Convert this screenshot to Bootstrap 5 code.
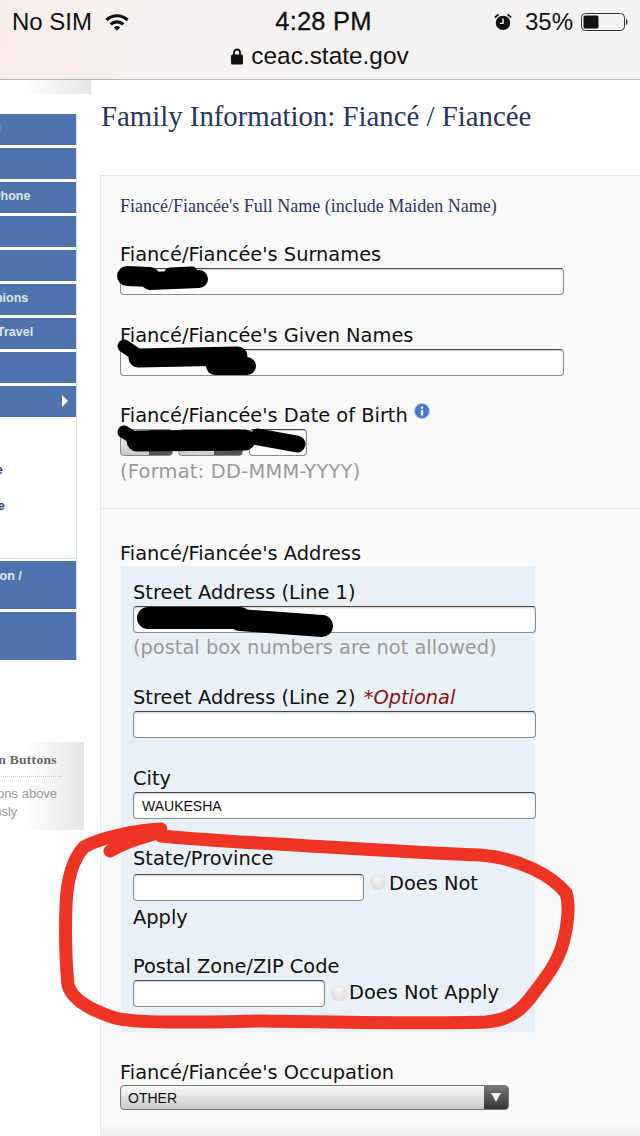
<!DOCTYPE html>
<html lang="en">
<head>
    <meta charset="UTF-8">
    <meta name="viewport" content="width=device-width, initial-scale=1.0">
    <title>Family Information: Fiancé / Fiancée</title>
    <link href="https://cdn.jsdelivr.net/npm/bootstrap@5.3.0/dist/css/bootstrap.min.css" rel="stylesheet">
    <style>
        html, body { width: 640px; height: 1136px; overflow: hidden; }
        body { background: #fff; color: #111; font-family: "DejaVu Sans", sans-serif; position: relative; }

        /* phone status bar */
        .phone-bar { height: 80px; border-bottom: 1px solid #b9b9b9; font-family: "Liberation Sans", sans-serif; color: #111;
            background: linear-gradient(100deg, #f8ece9 0%, #f5f2f1 22%, #f4f3f3 100%); }
        .phone-top { height: 43px; padding: 0 12px; font-size: 24px; }
        .phone-top > div { flex: 1 1 0; }
        .phone-sim { gap: 12px; }
        .phone-time { font-size: 25.5px; font-weight: 500; -webkit-text-stroke: .3px #111; letter-spacing: .2px; white-space: nowrap; padding-left: 7px; }
        .phone-url { font-size: 24.4px; height: 26px; line-height: 26px; margin-top: 0; }
        .alarm-ico { margin-right: 13px; }

        .top-strip { height: 14px; width: 91px; background: linear-gradient(90deg, #fff 25%, #e6e6e6 100%); }

        /* left nav, scrolled off the left edge */
        .side-col { width: 100px; flex: none; overflow: hidden; }
        .side-nav { width: 237px; margin-left: -160px; margin-top: 20px; border-right: 1px solid #d3dfe9; }
        .side-item { background: #4f73ad; color: #dfe6f0; font: bold 12.5px "Liberation Sans", sans-serif; height: 31px; margin-bottom: 3px; padding: 7px 0 0 73px; white-space: nowrap; position: relative; }
        .side-item.is-first { padding-left: 77px; }
        .side-item.is-tall { height: 48px; padding-top: 8px; }
        .side-arrow { position: absolute; right: 8px; top: 9px; border-left: 6px solid #fff; border-top: 6px solid transparent; border-bottom: 6px solid transparent; }
        .side-sub { height: 142px; margin-top: -3px; margin-bottom: 2px; border-bottom: 1px solid #d3dfe9; padding-top: 46px; font: bold 12.5px "Liberation Sans", sans-serif; color: #263a72; }
        .side-sub div { height: 36px; padding-left: 73px; white-space: nowrap; }
        .side-wrap { width: 84px; overflow: hidden; }
        .help-box { margin-top: 82px; height: 88px; width: 244px; margin-left: -160px; padding: 10px 22px 0 87px; background: linear-gradient(90deg, #fff 75%, #e6e6e6 100%); white-space: nowrap; }
        .help-title { font: bold 13.5px "Liberation Serif", serif; letter-spacing: .3px; color: #666; padding: 0 0 8px 13px; border-bottom: 1px dotted #c4c4c4; }
        .help-text { font: 13px/18px "Liberation Sans", sans-serif; color: #999; margin-top: 8px; }

        /* main column */
        .page-title { font: 28.8px/36px "Liberation Serif", serif; color: #29345f; margin: 4px 0 0 1px; }
        .form-panel { margin-top: 41px; padding: 20px 0 0 19px; border: 0 dotted #ddd; border-width: 1px 0 0 1px; height: 1000px; background: linear-gradient(#f9f9f9 941px, #f2f2f2 961px); }
        .panel-sub { font: 18px/20px "Liberation Serif", serif; color: #2c3768; margin: 0 0 27px; }
        .fld-label { font-size: 19.4px; line-height: 24px; height: 22px; white-space: nowrap; display: block; margin: 0 0 3px; }
        .fld-gap { margin-top: 28px; }
        .fld-gap-s { margin-top: 27px; }
        .fld-gap-l { margin-top: 29px; }
        .fld-gap-zip { margin-top: 21px; }
        .fld-dob { margin-top: 27px; margin-bottom: 4px; }
        .fld-input.form-control { height: 27px; min-height: 0; padding: 0 8px; font: 14px "Liberation Sans", sans-serif; color: #111; border: 1px solid #8d8d8d; border-top-color: #444; border-radius: 4px; box-shadow: inset 0 1px 2px rgba(0,0,0,.2); background: #fff; }
        .w-name { width: 444px; }
        .w-addr { width: 403px; }
        .fld-hint { font-size: 19.4px; line-height: 22px; color: #999; margin-top: 4px; }
        .fld-hint.is-date { margin-top: 5px; letter-spacing: .25px; }
        .fld-opt { color: #8a1410; font-style: italic; margin-left: 2px; }
        .info-dot { width: 16px; height: 16px; margin-left: 6px; vertical-align: 3px; }
        .date-sel { height: 27px; width: 53px; border: 1px solid #888; border-radius: 4px; background: linear-gradient(90deg, transparent 55%, #555 0), linear-gradient(#eee, #ccc); }
        .date-sel.is-mid { width: 65px; margin: 0 6px 0 5px; }
        .date-year.form-control { width: 58px; }
        .dotted-line { border-top: 1px dotted #d6d6d6; margin: 25px 0 33px -19px; }
        .addr-panel { width: 414px; height: 466px; margin: -1px 0 0 1px; padding: 15px 0 0 12px; background: #e9f0f6; }
        .state-row { font-size: 19.4px; line-height: 33px; margin-top: -5px; }
        .state-row .form-control { width: 231px; vertical-align: -2px; }
        .state-row .check-dot { margin-right: 3px; vertical-align: 0; }
        .zip-row .form-control { width: 192px; }
        .zip-row .fld-label { margin: 0 0 0 2px; line-height: 22px; }
        .check-dot { width: 16px; height: 16px; border-radius: 50%; flex: none; margin-left: 6px; background: radial-gradient(circle at 50% 35%, #f6f6f6, #d4d4d4); }
        .sel-box { width: 389px; height: 25px; margin-top: -1px; border: 1px solid #777; border-radius: 4px; background: linear-gradient(#fafafa, #c9c9c9); font: 14px "Liberation Sans", sans-serif; padding-left: 7px; overflow: hidden; }
        .sel-arrow { width: 24px; height: 100%; margin-left: auto; background: linear-gradient(#777, #333); }
        .sel-arrow span { border-top: 9px solid #eee; border-left: 5px solid transparent; border-right: 5px solid transparent; }

        /* pen marks on the screenshot */
        .ink-layer { position: absolute; left: 0; top: 0; pointer-events: none; }
    </style>
</head>
<body>
    <div class="phone-bar">
        <div class="phone-top d-flex align-items-center">
            <div class="d-flex align-items-center phone-sim">No SIM
                <svg width="26" height="19" viewBox="0 0 24 18"><path d="M1 6.5a16 16 0 0 1 22 0l-2 2.2a13 13 0 0 0-18 0z M5 10.6a10.4 10.4 0 0 1 14 0l-2.1 2.2a7.4 7.4 0 0 0-9.8 0z M9 14.6a4.6 4.6 0 0 1 6 0l-3 3.2z" fill="#111"/></svg>
            </div>
            <div class="text-center phone-time">4:28 PM</div>
            <div class="d-flex align-items-center justify-content-end">
                <svg width="18" height="20" viewBox="0 0 20 20" class="alarm-ico"><circle cx="10" cy="11" r="8" fill="#111"/><path d="M10 6v5.5h-3.5" stroke="#fff" stroke-width="1.6" fill="none"/><path d="M1 5l4-3.5M19 5l-4-3.5" stroke="#111" stroke-width="2"/></svg>
                <span>35%</span>
                <svg width="47" height="18" viewBox="0 0 47 18" class="ms-2"><rect x=".5" y=".5" width="43" height="17" rx="4" fill="none" stroke="#333"/><rect x="2.5" y="2.5" width="15" height="13" rx="1.5" fill="#111"/><path d="M45 6c2 0 2 6 0 6z" fill="#333"/></svg>
            </div>
        </div>
        <div class="phone-url d-flex justify-content-center align-items-center gap-2">
            <svg width="12" height="17" viewBox="0 0 12 17"><path d="M3 7V4.5a3 3 0 0 1 6 0V7" fill="none" stroke="#111" stroke-width="1.8"/><rect y="6.5" width="12" height="10" rx="1.5" fill="#111"/></svg>
            ceac.state.gov
        </div>
    </div>
    <div class="top-strip"></div>

    <div class="d-flex">
        <div class="side-col">
            <div class="side-nav">
                <div class="side-item is-first">Your Personal</div>
                <div class="side-item">Start</div>
                <div class="side-item">Address and Phone</div>
                <div class="side-item">Passport</div>
                <div class="side-item">Travel</div>
                <div class="side-item">Travel Companions</div>
                <div class="side-item">Previous U.S. Travel</div>
                <div class="side-item">U.S. Contact</div>
                <div class="side-item">Family<span class="side-arrow"></span></div>
                <div class="side-sub">
                    <div>Fiancé/Fiancée</div>
                    <div>Former Spouse</div>
                </div>
                <div class="side-item is-tall">Work / Education /</div>
                <div class="side-item is-tall mb-0">Security</div>
            </div>
            <div class="side-wrap">
                <div class="help-box">
                    <div class="help-title">Navigation Buttons</div>
                    <div class="help-text">Use the buttons above<br>used previously</div>
                </div>
            </div>
        </div>

        <div class="flex-grow-1">
            <h1 class="page-title">Family Information: Fiancé / Fiancée</h1>
            <div class="form-panel">
                <p class="panel-sub">Fiancé/Fiancée's Full Name (include Maiden Name)</p>

                <label class="fld-label">Fiancé/Fiancée's Surnames</label>
                <input class="form-control fld-input w-name" type="text">

                <label class="fld-label fld-gap-l">Fiancé/Fiancée's Given Names</label>
                <input class="form-control fld-input w-name" type="text">

                <label class="fld-label fld-dob">Fiancé/Fiancée's Date of Birth<svg class="info-dot" viewBox="0 0 16 16"><circle cx="8" cy="8" r="7.5" fill="#3f78d0" stroke="#a9c4ea"/><circle cx="8" cy="4.6" r="1.3" fill="#fff"/><rect x="6.8" y="7" width="2.4" height="5.5" fill="#fff"/></svg></label>
                <div class="d-flex">
                    <div class="date-sel"></div>
                    <div class="date-sel is-mid"></div>
                    <input class="form-control fld-input date-year" type="text">
                </div>
                <div class="fld-hint is-date">(Format: DD-MMM-YYYY)</div>

                <div class="dotted-line"></div>

                <label class="fld-label">Fiancé/Fiancée's Address</label>
                <div class="addr-panel">
                    <label class="fld-label">Street Address (Line 1)</label>
                    <input class="form-control fld-input w-addr" type="text">
                    <div class="fld-hint">(postal box numbers are not allowed)</div>

                    <label class="fld-label fld-gap-s">Street Address (Line 2) <span class="fld-opt">*Optional</span></label>
                    <input class="form-control fld-input w-addr" type="text">

                    <label class="fld-label fld-gap-l">City</label>
                    <input class="form-control fld-input w-addr" type="text" value="WAUKESHA">

                    <label class="fld-label fld-gap">State/Province</label>
                    <div class="state-row">
                        <input class="form-control fld-input d-inline-block" type="text"><span class="check-dot d-inline-block"></span>Does Not Apply
                    </div>

                    <label class="fld-label fld-gap-zip">Postal Zone/ZIP Code</label>
                    <div class="zip-row d-flex align-items-center">
                        <input class="form-control fld-input" type="text">
                        <span class="check-dot"></span><span class="fld-label">Does Not Apply</span>
                    </div>
                </div>

                <label class="fld-label fld-gap-l">Fiancé/Fiancée's Occupation</label>
                <div class="sel-box d-flex align-items-center">OTHER
                    <div class="sel-arrow d-flex align-items-center justify-content-center"><span></span></div>
                </div>
            </div>
        </div>
    </div>

    <svg class="ink-layer" width="640" height="1136" viewBox="0 0 640 1136">
        <g fill="none" stroke="#000" stroke-linecap="round" stroke-linejoin="round">
            <path d="M127 276L150 277" stroke-width="20"/>
            <path d="M150 281L199 279" stroke-width="18"/>
            <path d="M170 273L192 272" stroke-width="11"/>
            <path d="M124 346L136 354" stroke-width="13"/>
            <path d="M138 358L238 356" stroke-width="19"/>
            <path d="M215 366L247 366" stroke-width="18"/>
            <path d="M124 432L136 439" stroke-width="13"/>
            <path d="M137 441L245 440" stroke-width="21"/>
            <path d="M258 437L297 444" stroke-width="17"/>
            <path d="M148 618L240 618" stroke-width="22"/>
            <path d="M240 620L322 626" stroke-width="22"/>
        </g>
        <path d="M161 829 C135 830 100 838 84 847 C72 860 67 880 66 905 C65 935 66 965 68 985 C72 1000 90 1010 115 1018 C140 1024 200 1022 260 1021 C330 1022 420 1024 486 1022 C510 1020 522 1010 534 993 C548 975 560 960 565 935 C568 920 570 905 566 893 C552 876 520 858 480 855 C400 852 300 845 240 842 C210 840 180 838 161 836 M110 851 C125 842 140 838 161 832" fill="none" stroke="#ee3424" stroke-width="13" stroke-linecap="round"/>
    </svg>

    <script src="https://cdn.jsdelivr.net/npm/bootstrap@5.3.0/dist/js/bootstrap.bundle.min.js"></script>
</body>
</html>
